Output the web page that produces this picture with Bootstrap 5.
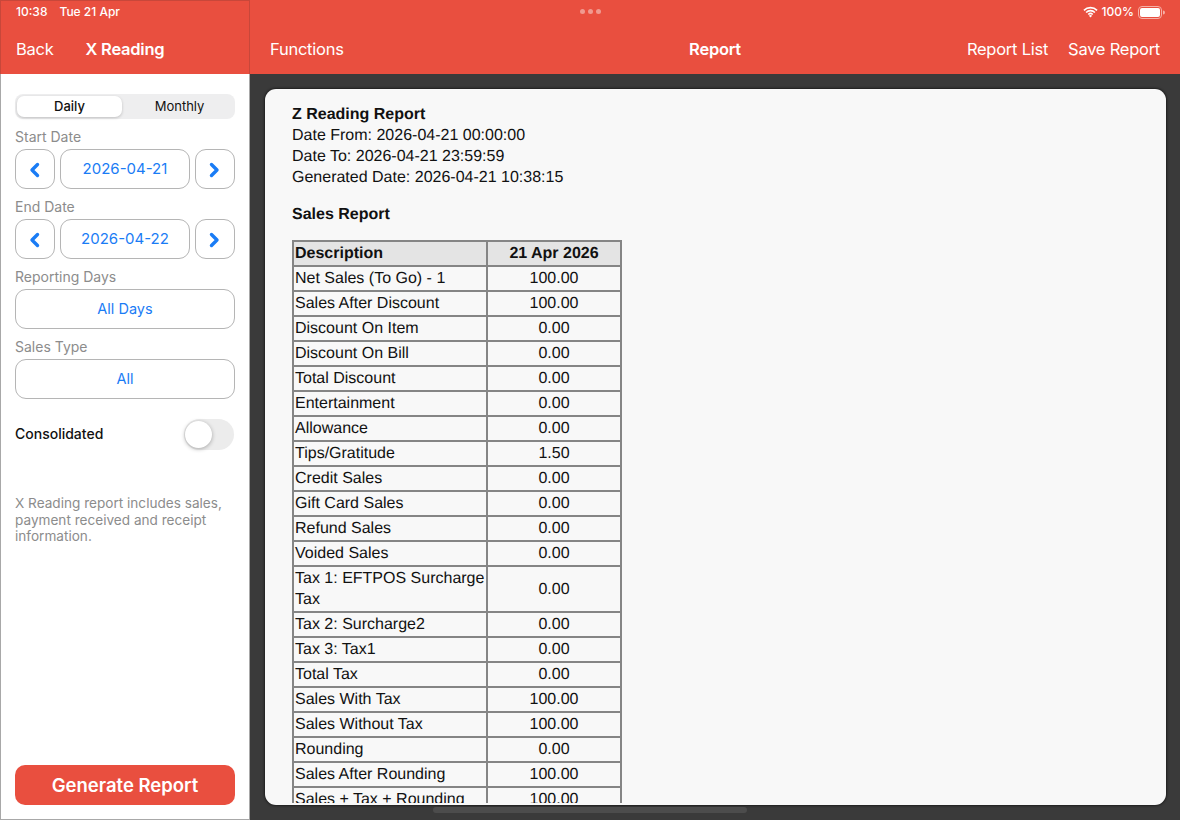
<!DOCTYPE html>
<html lang="en">
<head>
    <meta charset="UTF-8">
    <meta name="viewport" content="width=device-width, initial-scale=1.0">
    <title>X Reading</title>
    <link href="https://cdn.jsdelivr.net/npm/bootstrap@5.3.0/dist/css/bootstrap.min.css" rel="stylesheet">
    <style>
        html, body { height: 100%; }
        body {
            width: 1180px;
            height: 820px;
            overflow: hidden;
            font-family: Inter, "Liberation Sans", sans-serif;
            background: #3a3a3a;
        }
        .side-pane {
            width: 250px;
            flex: 0 0 250px;
            background: #fff;
            border-left: 1px solid #a8a8a8;
            border-bottom: 1px solid #a8a8a8;
            border-right: 1px solid #a8a8a8;
        }
        .red-head { height: 74px; background: #e94f3f; color: #fff; }
        .side-head { margin: 0 -1px; padding: 0 16px; box-shadow: inset 0 1px #c8473a, inset 1px 0 #c8473a, inset -1px 0 #c8473a; }
        .status-row { height: 24px; font-size: 12px; font-weight: 500; }
        .status-end { margin-right: -1px; }
        .nav-row { height: 50px; font-size: 16.5px; letter-spacing: -.25px; padding-top: 1px; }
        .nav-row strong { font-weight: 600; }
        .three-dots { gap: 3px; left: 330px; top: 9px; }
        .three-dots i { width: 5px; height: 5px; border-radius: 50%; background: #f09a90; display: block; }
        .side-body { padding: 20px 14px 14px; }
        .seg-wrap { background: #eeeeef; border-radius: 8px; height: 25px; padding: 2px; }
        .seg-btn {
            flex: 1 1 50%;
            border: 0;
            background: transparent;
            font-size: 13px;
            font-weight: 400;
            color: #111;
            line-height: 21px;
            padding: 0 0 0 4px;
            border-radius: 7px;
        }
        .seg-btn.on { flex: 0 0 105px; padding: 0; font-weight: 500; background: #fff; box-shadow: 0 1px 3px rgba(0,0,0,.2); }
        .field-label { height: 30px; padding-top: 9px; font-size: 14px; line-height: 18px; color: #8c8c8c; }
        .pick-btn {
            height: 40px;
            border: 1px solid #b5b5b5;
            border-radius: 11px;
            color: #1a7cf5;
            background: #fff;
            font-size: 14.5px;
            padding: 0;
        }
        .pick-btn:hover { color: #1a7cf5; background: #fff; border-color: #b5b5b5; }
        .arrow-btn { width: 40px; flex: 0 0 40px; }
        .arrow-back svg { margin-left: -3px; }
        .date-mid { margin: 0 5px; font-size: 15px; }
        .toggle-row { margin-top: 20px; height: 31px; font-size: 14px; font-weight: 500; color: #111; }
        .toggle-name { padding-bottom: 2px; }
        .toggle-track {
            width: 50px;
            height: 31px;
            margin-right: 1px;
            background: #ececec;
            position: relative;
        }
        .toggle-knob {
            position: absolute;
            left: 1px;
            top: 2px;
            width: 27px;
            height: 27px;
            border-radius: 50%;
            background: #fff;
            box-shadow: 0 1px 4px rgba(0,0,0,.3);
        }
        .side-note { margin-top: 45px; font-size: 13.6px; line-height: 16.5px; color: #8c8c8c; }
        .gen-btn {
            height: 40px;
            background: #e94f3f;
            border: 0;
            border-radius: 10px;
            color: #fff;
            font-size: 18.5px;
            font-weight: 600;
            padding: 1px 0 0;
        }
        .gen-btn:hover { background: #e94f3f; color: #fff; }
        .report-area { padding: 15px 14px 15px 15px; background: #3a3a3a; min-height: 0; }
        .report-sheet {
            height: 100%;
            background: #f8f8f8;
            border-radius: 11px;
            overflow: hidden;
            padding: 15px 28px 2px 27px;
            font-family: "Liberation Sans", Arial, sans-serif;
            font-size: 16px;
            line-height: 21px;
            color: #111;
            box-shadow: 0 0 3px #000;
            text-rendering: geometricPrecision;
        }
        .report-scroll { height: 100%; overflow: hidden; }
        .report-sheet h6 { font-size: 16px; line-height: 21px; font-weight: 700; margin: 0; }
        .report-lines { margin-bottom: 16px; }
        .report-tbl {
            width: 330px;
            margin-top: 15px;
            border-collapse: collapse;
            table-layout: fixed;
            background: #f8f8f8;
        }
        .report-tbl th, .report-tbl td {
            border: 2px solid #858585;
            padding: 1px 0 1px 1px;
            font-size: 16px;
            line-height: 21px;
            font-weight: 400;
        }
        .report-tbl th { background: #e4e4e4; font-weight: 700; }
        .report-tbl .amt { text-align: center; width: 134px; padding-left: 0; }
        .home-bar {
            position: absolute;
            left: 433px;
            top: 807px;
            width: 314px;
            height: 6px;
            border-radius: 3px;
            background: #4c4c4c;
        }
    </style>
</head>
<body>
    <div class="d-flex h-100">
        <!-- left pane -->
        <div class="side-pane d-flex flex-column">
            <div class="red-head side-head">
                <div class="status-row d-flex align-items-center gap-2">
                    <span>10:38</span><span class="ms-1">Tue 21 Apr</span>
                </div>
                <div class="nav-row d-flex align-items-center">
                    <span>Back</span>
                    <strong class="ms-4 ps-2">X Reading</strong>
                </div>
            </div>
            <div class="side-body d-flex flex-column flex-grow-1">
                <div class="seg-wrap d-flex">
                    <button class="seg-btn on" type="button">Daily</button>
                    <button class="seg-btn" type="button">Monthly</button>
                </div>

                <div class="field-label">Start Date</div>
                <div class="d-flex">
                    <button class="btn pick-btn arrow-btn arrow-back" type="button" aria-label="Previous">
                        <svg width="12" height="16" viewBox="0 0 12 16"><path d="M9.500 2.500 4 8l5.500 5.500" fill="none" stroke="#1a7cf5" stroke-width="3.400" stroke-linecap="round" stroke-linejoin="round"/></svg>
                    </button>
                    <button class="btn pick-btn date-mid flex-grow-1" type="button">2026-04-21</button>
                    <button class="btn pick-btn arrow-btn" type="button" aria-label="Next">
                        <svg width="12" height="16" viewBox="0 0 12 16"><path d="M2.500 2.500 8 8l-5.500 5.500" fill="none" stroke="#1a7cf5" stroke-width="3.400" stroke-linecap="round" stroke-linejoin="round"/></svg>
                    </button>
                </div>

                <div class="field-label">End Date</div>
                <div class="d-flex">
                    <button class="btn pick-btn arrow-btn arrow-back" type="button" aria-label="Previous">
                        <svg width="12" height="16" viewBox="0 0 12 16"><path d="M9.500 2.500 4 8l5.500 5.500" fill="none" stroke="#1a7cf5" stroke-width="3.400" stroke-linecap="round" stroke-linejoin="round"/></svg>
                    </button>
                    <button class="btn pick-btn date-mid flex-grow-1" type="button">2026-04-22</button>
                    <button class="btn pick-btn arrow-btn" type="button" aria-label="Next">
                        <svg width="12" height="16" viewBox="0 0 12 16"><path d="M2.500 2.500 8 8l-5.500 5.500" fill="none" stroke="#1a7cf5" stroke-width="3.400" stroke-linecap="round" stroke-linejoin="round"/></svg>
                    </button>
                </div>

                <div class="field-label">Reporting Days</div>
                <button class="btn pick-btn w-100" type="button">All Days</button>

                <div class="field-label">Sales Type</div>
                <button class="btn pick-btn w-100" type="button">All</button>

                <div class="toggle-row d-flex align-items-center justify-content-between">
                    <span class="toggle-name">Consolidated</span>
                    <span class="toggle-track d-block rounded-pill"><span class="toggle-knob"></span></span>
                </div>

                <div class="side-note">X Reading report includes sales, payment received and receipt information.</div>

                <button class="btn gen-btn w-100 mt-auto" type="button">Generate Report</button>
            </div>
        </div>

        <!-- report pane -->
        <div class="flex-grow-1 d-flex flex-column position-relative" style="min-width:0">
            <div class="red-head px-3 flex-shrink-0">
                <div class="status-row status-end d-flex align-items-center justify-content-end gap-1">
                    <svg width="15" height="12" viewBox="0 0 16 12"><path d="M1 4.200a10 10 0 0 1 14 0M3.300 6.500a6.700 6.700 0 0 1 9.400 0M5.600 8.700a3.400 3.400 0 0 1 4.800 0" fill="none" stroke="#fff" stroke-width="1.700"/><path d="M8 11.800 6.300 10a2.400 2.400 0 0 1 3.400 0z" fill="#fff"/></svg>
                    <span>100%</span>
                    <svg width="27" height="13" viewBox="0 0 27 13"><rect x=".5" y=".5" width="23" height="12" rx="3.500" fill="none" stroke="#f6b0a8"/><rect x="2" y="2" width="20" height="9" rx="2" fill="#fff"/><path d="M25 4.500a2 2 0 0 1 0 4z" fill="#f6b0a8"/></svg>
                </div>
                <div class="three-dots d-flex position-absolute">
                    <i></i><i></i><i></i>
                </div>
                <div class="nav-row d-flex align-items-center position-relative px-1">
                    <span>Functions</span>
                    <strong class="position-absolute start-50 translate-middle-x">Report</strong>
                    <span class="ms-auto">Report List</span>
                    <span class="ms-3 ps-1">Save Report</span>
                </div>
            </div>
            <div class="report-area flex-grow-1">
                <div class="report-sheet">
                    <div class="report-scroll">
                        <div class="report-lines">
                            <h6>Z Reading Report</h6>
                            <div>Date From: 2026-04-21 00:00:00</div>
                            <div>Date To: 2026-04-21 23:59:59</div>
                            <div>Generated Date: 2026-04-21 10:38:15</div>
                        </div>
                        <h6>Sales Report</h6>
                        <table class="report-tbl" id="salesTbl">
                            <thead>
                                <tr><th>Description</th><th class="amt">21 Apr 2026</th></tr>
                            </thead>
                            <tbody>
                                <tr><td>Net Sales (To Go) - 1</td><td class="amt">100.00</td></tr>
                                <tr><td>Sales After Discount</td><td class="amt">100.00</td></tr>
                                <tr><td>Discount On Item</td><td class="amt">0.00</td></tr>
                                <tr><td>Discount On Bill</td><td class="amt">0.00</td></tr>
                                <tr><td>Total Discount</td><td class="amt">0.00</td></tr>
                                <tr><td>Entertainment</td><td class="amt">0.00</td></tr>
                                <tr><td>Allowance</td><td class="amt">0.00</td></tr>
                                <tr><td>Tips/Gratitude</td><td class="amt">1.50</td></tr>
                                <tr><td>Credit Sales</td><td class="amt">0.00</td></tr>
                                <tr><td>Gift Card Sales</td><td class="amt">0.00</td></tr>
                                <tr><td>Refund Sales</td><td class="amt">0.00</td></tr>
                                <tr><td>Voided Sales</td><td class="amt">0.00</td></tr>
                                <tr><td>Tax 1: EFTPOS Surcharge Tax</td><td class="amt">0.00</td></tr>
                                <tr><td>Tax 2: Surcharge2</td><td class="amt">0.00</td></tr>
                                <tr><td>Tax 3: Tax1</td><td class="amt">0.00</td></tr>
                                <tr><td>Total Tax</td><td class="amt">0.00</td></tr>
                                <tr><td>Sales With Tax</td><td class="amt">100.00</td></tr>
                                <tr><td>Sales Without Tax</td><td class="amt">100.00</td></tr>
                                <tr><td>Rounding</td><td class="amt">0.00</td></tr>
                                <tr><td>Sales After Rounding</td><td class="amt">100.00</td></tr>
                                <tr><td>Sales + Tax + Rounding</td><td class="amt">100.00</td></tr>
                            </tbody>
                        </table>
                    </div>
                </div>
            </div>
        </div>
    </div>
    <div class="home-bar"></div>
    <script src="https://cdn.jsdelivr.net/npm/bootstrap@5.3.0/dist/js/bootstrap.bundle.min.js"></script>
</body>
</html>
